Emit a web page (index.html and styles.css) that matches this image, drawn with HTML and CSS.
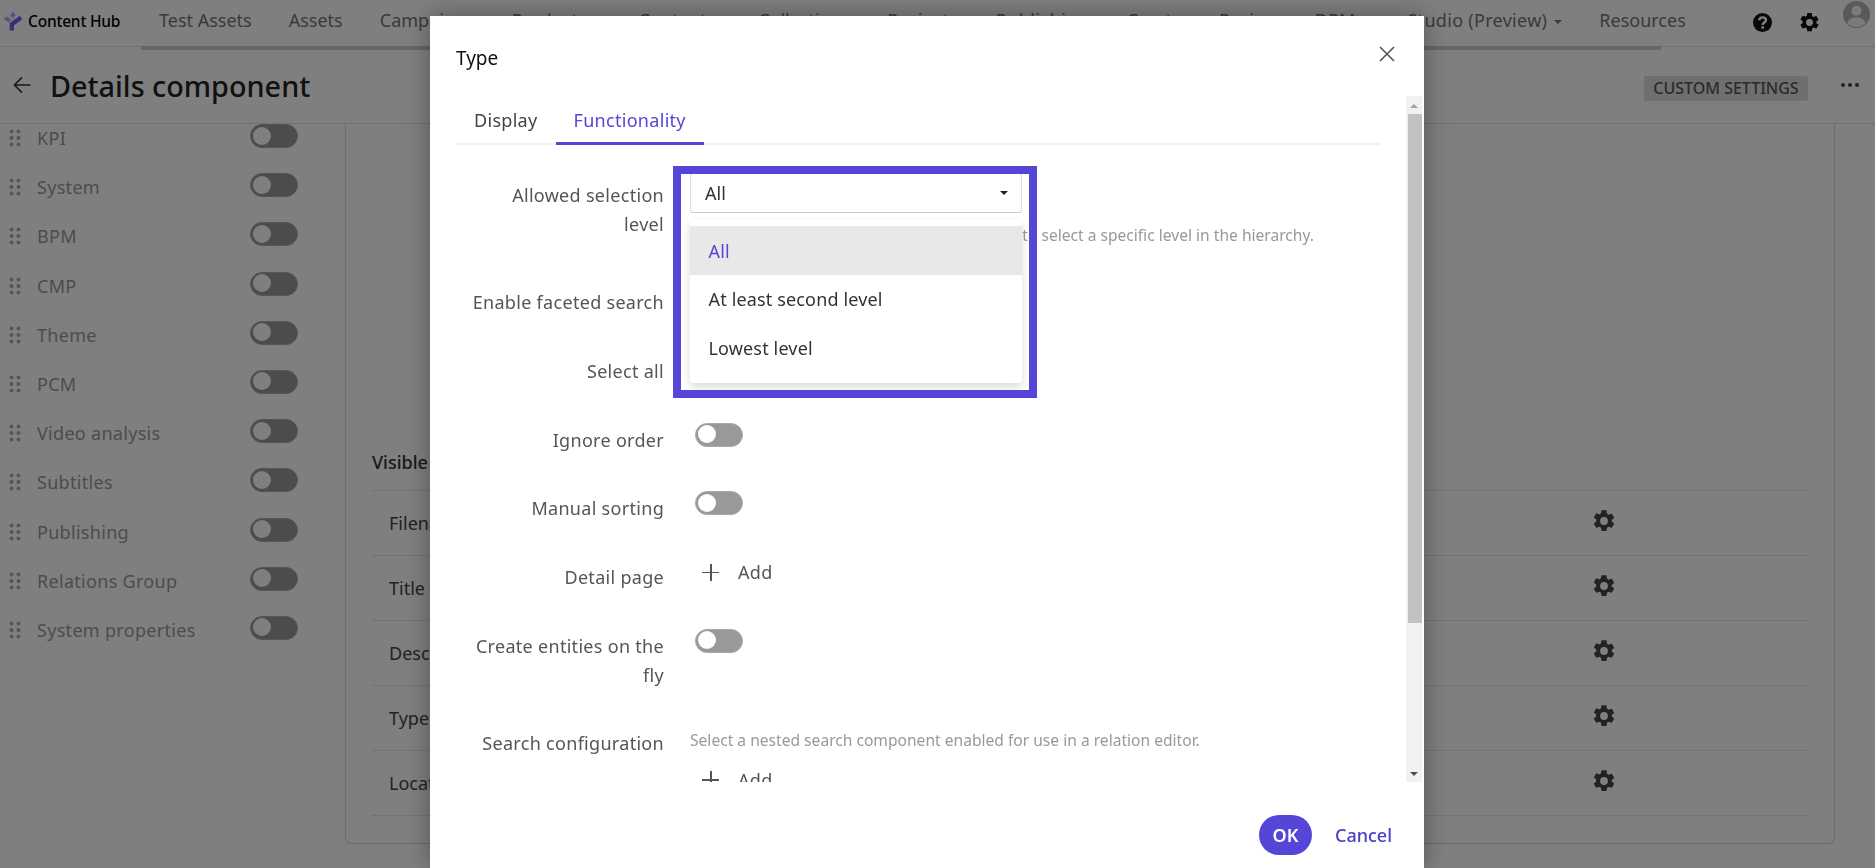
FILE: index.html
```html
<!DOCTYPE html>
<html lang="en">
<head>
<meta charset="utf-8">
<title>Details component</title>
<link rel="stylesheet" href="styles.css">
</head>
<body>
<svg class="defs" width="0" height="0" aria-hidden="true">
  <symbol id="gear" viewBox="0 0 24 24"><path fill="currentColor" d="M19.14 12.94c.04-.3.06-.61.06-.94s-.02-.64-.07-.94l2.03-1.58a.49.49 0 0 0 .12-.61l-1.92-3.32a.49.49 0 0 0-.59-.22l-2.39.96a7 7 0 0 0-1.62-.94l-.36-2.54A.48.48 0 0 0 13.92 2h-3.84a.47.47 0 0 0-.47.41l-.36 2.54c-.59.24-1.13.57-1.62.94l-2.39-.96a.49.49 0 0 0-.59.22L2.73 8.47a.47.47 0 0 0 .12.61l2.03 1.58c-.05.3-.08.63-.08.94s.02.64.07.94l-2.03 1.58a.49.49 0 0 0-.12.61l1.92 3.32c.12.22.37.29.59.22l2.39-.96c.5.38 1.03.7 1.62.94l.36 2.54c.05.24.24.41.48.41h3.84c.24 0 .44-.17.47-.41l.36-2.54c.59-.24 1.13-.56 1.62-.94l2.39.96c.22.08.47 0 .59-.22l1.92-3.32a.46.46 0 0 0-.12-.61l-2.01-1.58zM12 15.6A3.6 3.6 0 1 1 12 8.4a3.6 3.6 0 0 1 0 7.2z"/></symbol>
  <symbol id="grip" viewBox="0 0 12 18"><g fill="currentColor"><circle cx="2.5" cy="2.5" r="2"/><circle cx="9.5" cy="2.5" r="2"/><circle cx="2.5" cy="9" r="2"/><circle cx="9.5" cy="9" r="2"/><circle cx="2.5" cy="15.5" r="2"/><circle cx="9.5" cy="15.5" r="2"/></g></symbol>
</svg>

<div class="page">
  <header class="topbar">
    <div class="brand">
      <svg class="brand-logo" viewBox="0 0 20 20"><path fill="#7460f0" d="M6.6 19.4V11.9L16.8 4.8 19.4 8.4 11 14.2V19.4z"/><path fill="#b8a0ff" d="M.6 7.8 4 5.6 8 8.6 5.8 11.4z"/><path fill="#b8a0ff" d="M10 .6 12.6 4.2 9.6 7.4 7.2 4.2z"/></svg>
      <span class="brand-name">Content Hub</span>
    </div>
    <nav class="mainnav">
      <span>Test Assets</span>
      <span>Assets</span>
      <span>Campaigns</span>
      <span>Products<i class="caret caret-nav"></i></span>
      <span>Content<i class="caret caret-nav"></i></span>
      <span>Collections</span>
      <span class="nav-wide">Projects</span>
      <span class="nav-wide">Publishing</span>
      <span>Create</span>
      <span>Review</span>
      <span>DRM<i class="caret caret-nav"></i></span>
      <span class="nav-studio">Studio (Preview)<i class="caret caret-nav"></i></span>
      <span>Resources</span>
    </nav>
    <div class="top-icons">
      <svg class="ico-help" viewBox="0 0 20 20"><circle cx="10" cy="10" r="10" fill="currentColor"/><path fill="none" stroke="#fff" stroke-width="2.6" d="M6.4 7.6A3.6 3.6 0 0 1 10 4.6c2 0 3.6 1.2 3.6 3 0 2.6-3.4 2.4-3.4 5"/><rect x="8.8" y="14" width="2.8" height="2.6" fill="#fff"/></svg>
      <svg class="ico-gear"><use href="#gear"/></svg>
      <svg class="ico-avatar" viewBox="0 0 28 28"><circle cx="14" cy="14" r="14" fill="#b2b2b2"/><circle cx="14" cy="10" r="5.2" fill="#f4f4f4"/><path fill="#f4f4f4" d="M4.6 23c1.2-4.4 5-6.2 9.4-6.2s8.2 1.8 9.4 6.2A14 14 0 0 1 14 27a14 14 0 0 1-9.4-4z"/></svg>
    </div>
    <div class="nav-track"></div>
  </header>

  <div class="pagehead">
    <svg class="back" viewBox="0 0 18 18"><path fill="none" stroke="currentColor" stroke-width="1.6" d="M17.5 9H1.8M9 1.4 1.4 9 9 16.6"/></svg>
    <h1>Details component</h1>
    <button class="custom">CUSTOM SETTINGS</button>
    <span class="more"><i></i><i></i><i></i></span>
  </div>

  <div class="content">
    <aside class="sidebar">
      <div class="side-row"><svg class="grip"><use href="#grip"/></svg><span class="side-label">KPI</span><span class="toggle"></span></div>
      <div class="side-row"><svg class="grip"><use href="#grip"/></svg><span class="side-label">System</span><span class="toggle"></span></div>
      <div class="side-row"><svg class="grip"><use href="#grip"/></svg><span class="side-label">BPM</span><span class="toggle"></span></div>
      <div class="side-row"><svg class="grip"><use href="#grip"/></svg><span class="side-label">CMP</span><span class="toggle"></span></div>
      <div class="side-row"><svg class="grip"><use href="#grip"/></svg><span class="side-label">Theme</span><span class="toggle"></span></div>
      <div class="side-row"><svg class="grip"><use href="#grip"/></svg><span class="side-label">PCM</span><span class="toggle"></span></div>
      <div class="side-row"><svg class="grip"><use href="#grip"/></svg><span class="side-label">Video analysis</span><span class="toggle"></span></div>
      <div class="side-row"><svg class="grip"><use href="#grip"/></svg><span class="side-label">Subtitles</span><span class="toggle"></span></div>
      <div class="side-row"><svg class="grip"><use href="#grip"/></svg><span class="side-label">Publishing</span><span class="toggle"></span></div>
      <div class="side-row"><svg class="grip"><use href="#grip"/></svg><span class="side-label">Relations Group</span><span class="toggle"></span></div>
      <div class="side-row"><svg class="grip"><use href="#grip"/></svg><span class="side-label">System properties</span><span class="toggle"></span></div>
    </aside>
    <main class="card">
      <h2 class="visible-title">Visible properties</h2>
      <div class="prop"><span>Filename</span><svg class="prop-gear"><use href="#gear"/></svg></div>
      <div class="prop"><span>Title</span><svg class="prop-gear"><use href="#gear"/></svg></div>
      <div class="prop"><span>Description</span><svg class="prop-gear"><use href="#gear"/></svg></div>
      <div class="prop"><span>Type</span><svg class="prop-gear"><use href="#gear"/></svg></div>
      <div class="prop"><span>Location</span><svg class="prop-gear"><use href="#gear"/></svg></div>
    </main>
  </div>
</div>

<div class="overlay"></div>

<section class="modal">
  <div class="modal-head">
    <span class="modal-title">Type</span>
    <svg class="close" viewBox="0 0 16 16"><path fill="none" stroke="currentColor" stroke-width="1.6" d="M1 1l14 14M15 1 1 15"/></svg>
  </div>
  <div class="modal-body">
    <div class="modal-scroll">
      <div class="tabs">
        <span class="tab">Display</span>
        <span class="tab tab-active">Functionality</span>
      </div>
      <div class="form">
        <div class="row row-first">
          <label>Allowed selection level</label>
          <div class="value">
            <div class="select"><span>All</span><i class="caret"></i></div>
            <p class="hint hint-first">Users can pick any item, or restrict them to select a specific level in the hierarchy.</p>
            <div class="menu">
              <div class="menu-item menu-item-on">All</div>
              <div class="menu-item">At least second level</div>
              <div class="menu-item">Lowest level</div>
            </div>
          </div>
        </div>
        <div class="row"><label>Enable faceted search</label><div class="value"><span class="toggle"></span></div></div>
        <div class="row"><label>Select all</label><div class="value"><span class="toggle"></span></div></div>
        <div class="row"><label>Ignore order</label><div class="value"><span class="toggle"></span></div></div>
        <div class="row"><label>Manual sorting</label><div class="value"><span class="toggle"></span></div></div>
        <div class="row"><label>Detail page</label><div class="value"><span class="add"><b class="plus"></b>Add</span></div></div>
        <div class="row"><label>Create entities on the fly</label><div class="value"><span class="toggle"></span></div></div>
        <div class="row"><label>Search configuration</label>
          <div class="value">
            <p class="hint hint-search">Select a nested search component enabled for use in a relation editor.</p>
            <span class="add add-search"><b class="plus"></b>Add</span>
          </div>
        </div>
      </div>
      <div class="frame"></div>
    </div>
    <div class="scrollbar">
      <i class="arrow arrow-up"></i>
      <div class="thumb"></div>
      <div class="track"></div>
      <i class="arrow arrow-down"></i>
    </div>
  </div>
  <div class="modal-foot">
    <button class="ok">OK</button>
    <button class="cancel">Cancel</button>
  </div>
</section>
</body>
</html>
```

FILE: styles.css
```css
* { box-sizing: border-box; }
html, body { margin: 0; height: 100%; overflow: hidden; }
body { font-family: "Noto Sans", "Open Sans", sans-serif; font-size: 18px; color: #212121; background: #fff; }
.defs { position: absolute; }

.page { height: 868px; display: flex; flex-direction: column; overflow: hidden; }

/* top bar */
.topbar { position: relative; height: 47px; flex: none; display: flex; align-items: flex-start; border-bottom: 1px solid #e0e0e0; }
.brand { display: flex; align-items: center; width: 159px; padding: 10px 0 0 3px; flex: none; }
.brand-logo { width: 20px; height: 20px; flex: none; }
.brand-name { margin-left: 5px; font-size: 15.5px; font-weight: 500; color: #000; letter-spacing: -.2px; }
.mainnav { display: flex; gap: 37px; font-size: 18px; line-height: 41px; color: #757575; white-space: nowrap; }
.nav-wide { letter-spacing: .5px; }
.nav-studio { letter-spacing: .3px; }
.top-icons { position: absolute; right: 0; top: 0; display: flex; align-items: flex-start; }
.ico-help { width: 19px; height: 19px; margin: 13px 26px 0 0; color: #111; }
.ico-gear { width: 23px; height: 23px; margin: 11px 22px 0 0; color: #111; }
.ico-avatar { width: 27px; height: 27px; margin: 1px 5px 0 0; }
.nav-track { position: absolute; left: 141px; width: 1520px; top: 46px; height: 4px; background: #ccc; }
.caret { display: inline-block; width: 0; height: 0; border: 4px solid transparent; border-top-color: currentColor; border-bottom-width: 0; }
.caret-nav { margin-left: 7px; vertical-align: 3px; }

/* page head */
.pagehead { height: 77px; flex: none; display: flex; align-items: center; border-bottom: 1px solid #e0e0e0; padding: 6px 16px 0 13px; background: #fff; }
.back { width: 18px; height: 18px; flex: none; color: #333; margin-top: -7px; }
.pagehead h1 { margin: -3px 0 0 19px; font-size: 28.8px; font-weight: 500; color: #222; flex: 1; line-height: 1; }
.custom { width: 164px; height: 25px; border: 0; border-radius: 2px; background: #dedede; font: 500 16px "Noto Sans", sans-serif; color: #555; padding: 0; margin-right: 33px; }
.more { display: flex; gap: 3px; margin-top: -7px; }
.more i { width: 4px; height: 4px; border-radius: 50%; background: #444; }

/* content */
.content { flex: 1; display: flex; min-height: 0; padding: 0 40px 24px 0; }
.sidebar { width: 345px; flex: none; overflow: hidden; }
.side-row { height: 49.2px; display: flex; align-items: flex-start; padding-left: 9px; width: 298px; }
.grip { width: 12px; height: 18px; margin-top: 5px; color: #aaa; flex: none; }
.side-label { margin-left: 16px; flex: 1; line-height: 28px; color: #999; font-size: 18px; letter-spacing: .3px; }
.toggle { display: block; position: relative; width: 48px; height: 24px; border-radius: 12px; background: #999; border: 1.5px solid #aaa; flex: none; }
.toggle::after { content: ""; position: absolute; left: 1.5px; top: 1.5px; width: 18px; height: 18px; border-radius: 50%; background: #fff; }
.card { flex: 1; border: 1px solid #d8d8d8; border-top: 0; border-radius: 0 0 6px 6px; padding: 323px 26px 0; }
.visible-title { margin: 0; height: 44px; font-size: 18px; font-weight: 500; line-height: 30px; color: #333; border-bottom: 1px solid #e6e6e6; white-space: nowrap; }
.prop { height: 65px; display: flex; align-items: center; justify-content: space-between; border-bottom: 1px solid #e6e6e6; padding: 0 191px 0 17px; color: #444; }
.prop-gear { width: 26px; height: 26px; color: #444; margin-top: -5px; }

/* overlay */
.overlay { position: fixed; inset: 0; background: rgba(0,0,0,.5); z-index: 5; }

/* modal */
.modal { position: fixed; left: 430px; top: 16px; width: 994px; height: 852px; background: #fff; display: flex; flex-direction: column; box-shadow: 0 0 24px rgba(0,0,0,.35); z-index: 6; }
.modal-head { height: 80px; flex: none; display: flex; justify-content: space-between; padding: 30px 29px 0 26px; }
.modal-title { font-size: 19px; line-height: 25px; color: #111; }
.close { width: 16px; height: 16px; color: #555; }
.modal-body { height: 686px; flex: none; display: flex; }
.modal-scroll { flex: 1; min-width: 0; padding: 0 26px; overflow: hidden; position: relative; }
.tabs { display: flex; height: 49px; border-bottom: 2px solid #f0f0f0; letter-spacing: .3px; }
.tab { padding: 0 18px; line-height: 48px; height: 49px; color: #444; }
.tab-active { color: #5546d8; border-bottom: 3px solid #5546d8; }
.form { padding-top: 31px; }
.row { display: flex; margin-bottom: 36.2px; }
.row label { width: 208px; flex: none; text-align: right; padding: 3.5px 0 0 14px; line-height: 29px; color: #555; letter-spacing: .3px; }
.row-first label { padding-top: 4.5px; }
.value { flex: 1; margin-left: 26px; min-width: 0; position: relative; }
.value > .toggle { margin: .5px 0 0 5px; }
.row-first { height: 72.5px; }
.select { width: 332px; height: 40px; margin-top: -3px; border: 1px solid #ddd; border-bottom-color: #ccc; border-radius: 3px; display: flex; align-items: center; justify-content: space-between; padding: 0 13px 0 14px; color: #333; }
.select .caret { color: #222; }
.hint { margin: 0; font-size: 15.6px; line-height: 20px; color: #999; white-space: nowrap; }
.hint-first { position: absolute; right: 66px; top: 49px; }
.hint-search { padding-top: 4px; padding-bottom: 1px; }
.menu { position: absolute; left: 0; top: 44px; width: 332px; height: 163px; padding-top: 6px; background: #fff; border-radius: 3px; box-shadow: 0 4px 8px rgba(0,0,0,.15); z-index: 2; }
.menu-item { height: 49px; line-height: 49px; padding-left: 18.5px; color: #333; letter-spacing: .15px; }
.menu-item-on { background: #e8e8e8; color: #5546d8; line-height: 51px; }
.frame { position: absolute; left: 243px; top: 70px; width: 364px; height: 232px; border: 8px solid #5546d8; z-index: 3; pointer-events: none; }
.add { display: flex; align-items: center; height: 28px; color: #555; padding-left: 12px; margin-top: -1px; letter-spacing: .3px; }
.plus { position: relative; width: 17px; height: 17px; margin-right: 19px; flex: none; }
.plus::before, .plus::after { content: ""; position: absolute; background: #555; }
.plus::before { left: 0; right: 0; top: 8px; height: 1.5px; }
.plus::after { top: 0; bottom: 0; left: 8px; width: 1.5px; }
.add-search { margin-top: 15px; }

/* scrollbar */
.scrollbar { width: 18px; flex: none; background: #f1f1f1; border-right: 2px solid #fff; display: flex; flex-direction: column; align-items: center; }
.thumb { width: 14px; margin-left: 2px; height: 509px; background: #c1c1c1; }
.track { flex: 1; }
.arrow { display: block; width: 0; height: 0; border: 4px solid transparent; }
.arrow-up { border-bottom-color: #a3a3a3; border-top-width: 0; margin: 8px 0 6px; height: 0; }
.arrow-down { border-top-color: #505050; border-bottom-width: 0; margin: 0 0 6px; }

/* footer */
.modal-foot { flex: 1; display: flex; align-items: flex-start; justify-content: flex-end; padding: 33px 32px 0 0; gap: 23px; }
.ok { width: 53px; height: 40px; border: 0; border-radius: 20px; background: #5546d8; color: #fff; font: 600 18px "Noto Sans", sans-serif; padding: 0; }
.cancel { border: 0; background: none; color: #4a3fc4; font: 500 18px "Noto Sans", sans-serif; padding: 0; height: 40px; }
```
